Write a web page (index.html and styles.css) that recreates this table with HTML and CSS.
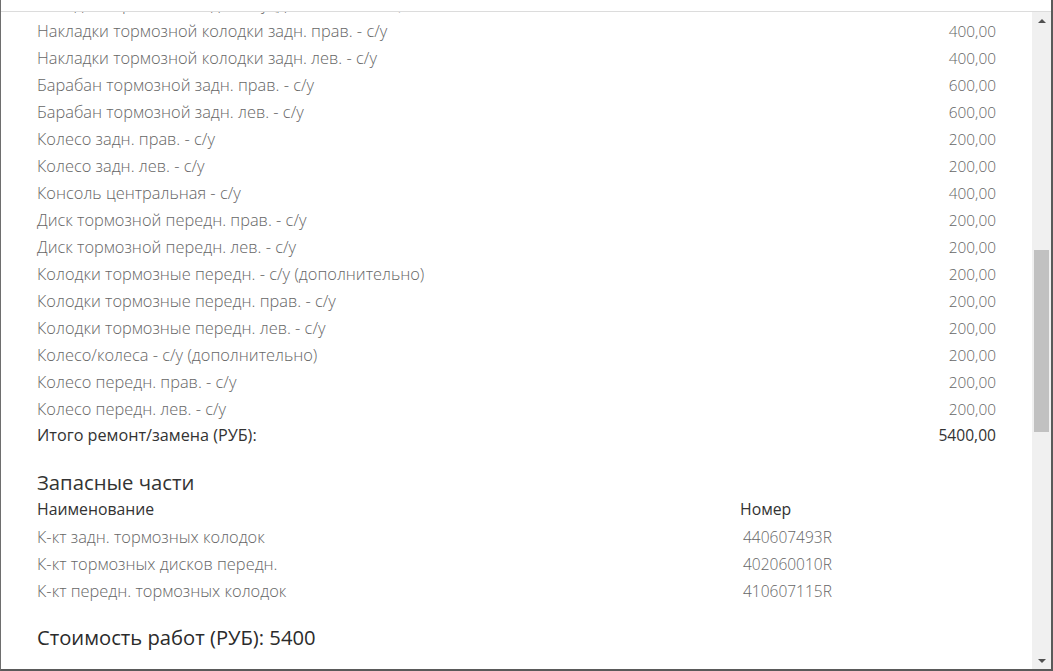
FILE: index.html
```html
<!DOCTYPE html>
<html lang="ru">
<head>
<meta charset="utf-8">
<title>Заказ-наряд</title>
<link rel="stylesheet" href="styles.css">
</head>
<body>
<div class="window">
  <div class="topbar"></div>
  <div class="main">
    <div class="viewport">
      <div class="content">
        <div class="rows">
          <div class="row"><span>Колодки тормозные задн. - с/у (дополнительно)</span><span class="price">400,00</span></div>
          <div class="row"><span>Накладки тормозной колодки задн. прав. - с/у</span><span class="price">400,00</span></div>
          <div class="row"><span>Накладки тормозной колодки задн. лев. - с/у</span><span class="price">400,00</span></div>
          <div class="row"><span>Барабан тормозной задн. прав. - с/у</span><span class="price">600,00</span></div>
          <div class="row"><span>Барабан тормозной задн. лев. - с/у</span><span class="price">600,00</span></div>
          <div class="row"><span>Колесо задн. прав. - с/у</span><span class="price">200,00</span></div>
          <div class="row"><span>Колесо задн. лев. - с/у</span><span class="price">200,00</span></div>
          <div class="row"><span>Консоль центральная - с/у</span><span class="price">400,00</span></div>
          <div class="row"><span>Диск тормозной передн. прав. - с/у</span><span class="price">200,00</span></div>
          <div class="row"><span>Диск тормозной передн. лев. - с/у</span><span class="price">200,00</span></div>
          <div class="row"><span>Колодки тормозные передн. - с/у (дополнительно)</span><span class="price">200,00</span></div>
          <div class="row"><span>Колодки тормозные передн. прав. - с/у</span><span class="price">200,00</span></div>
          <div class="row"><span>Колодки тормозные передн. лев. - с/у</span><span class="price">200,00</span></div>
          <div class="row"><span>Колесо/колеса - с/у (дополнительно)</span><span class="price">200,00</span></div>
          <div class="row"><span>Колесо передн. прав. - с/у</span><span class="price">200,00</span></div>
          <div class="row"><span>Колесо передн. лев. - с/у</span><span class="price">200,00</span></div>
          <div class="row total"><span>Итого ремонт/замена (РУБ):</span><span class="price">5400,00</span></div>
        </div>

        <h2 class="section-title">Запасные части</h2>
        <div class="parts">
          <div class="part head"><span class="name">Наименование</span><span class="num">Номер</span></div>
          <div class="part"><span class="name">К-кт задн. тормозных колодок</span><span class="num code">440607493R</span></div>
          <div class="part"><span class="name">К-кт тормозных дисков передн.</span><span class="num code">402060010R</span></div>
          <div class="part"><span class="name">К-кт передн. тормозных колодок</span><span class="num code">410607115R</span></div>
        </div>

        <h2 class="cost">Стоимость работ (РУБ): 5400</h2>
      </div>
    </div>
    <div class="scrollbar">
      <div class="sb-btn"><span class="arrow-up"></span></div>
      <div class="sb-before"></div>
      <div class="sb-thumb"></div>
      <div class="sb-after"></div>
      <div class="sb-btn"><span class="arrow-down"></span></div>
    </div>
  </div>
</div>
</body>
</html>
```

FILE: styles.css
```css
html, body {
  margin: 0;
  padding: 0;
  background: #ffffff;
}

body {
  width: 1053px;
  height: 671px;
  overflow: hidden;
  font-family: "Open Sans", "Noto Sans", sans-serif;
}

.window {
  box-sizing: border-box;
  width: 1053px;
  height: 671px;
  display: flex;
  flex-direction: column;
  border-left: 1px solid #6e6e6e;
  border-right: 2px solid #5a5a5a;
  border-bottom: 2px solid #5a5a5a;
  background: #fff;
}

.topbar {
  height: 11px;
  flex: none;
  border-bottom: 1px solid #dcdcdc;
  background: #fff;
}

.main {
  flex: 1;
  display: flex;
  min-height: 0;
}

.viewport {
  flex: 1;
  overflow: hidden;
}

.content {
  margin-top: -22px;
  padding: 0 36px;
}

.rows {
  display: flex;
  flex-direction: column;
}

.row {
  display: flex;
  justify-content: space-between;
  align-items: baseline;
  height: 27px;
  line-height: 27px;
  font-size: 16.4px;
  font-weight: 300;
  color: #666;
}

.row .price {
  font-size: 15.4px;
}

.row.total {
  font-size: 16.2px;
  font-weight: 400;
  color: #333;
}

.row.total .price {
  font-size: 15.6px;
}

.section-title {
  margin: 19px 0 0;
  font-size: 20.3px;
  line-height: 28px;
  font-weight: 400;
  color: #333;
}

.parts {
  display: flex;
  flex-direction: column;
}

.part {
  display: flex;
  align-items: baseline;
  height: 27px;
  line-height: 27px;
  font-size: 16.4px;
  font-weight: 300;
  color: #666;
}

.part .name {
  width: 703px;
  flex: none;
}

.part .code {
  padding-left: 3px;
  font-size: 15.5px;
}

.part.head {
  font-size: 15.8px;
  font-weight: 400;
  color: #333;
}

.cost {
  margin: 19px 0 0;
  font-size: 20.2px;
  line-height: 28px;
  font-weight: 500;
  color: #2b2b2b;
}

.scrollbar {
  width: 19px;
  flex: none;
  background: #f0f0f0;
  display: flex;
  flex-direction: column;
}

.sb-btn {
  height: 17px;
  flex: none;
  display: flex;
  align-items: center;
  justify-content: center;
}

.sb-before {
  height: 221px;
  flex: none;
}

.sb-thumb {
  height: 182px;
  flex: none;
  margin: 0 2px;
  background: #c1c1c1;
}

.sb-after {
  flex: 1;
}

.arrow-up {
  width: 0;
  height: 0;
  border-left: 4px solid transparent;
  border-right: 4px solid transparent;
  border-bottom: 4px solid #505050;
}

.arrow-down {
  width: 0;
  height: 0;
  border-left: 4px solid transparent;
  border-right: 4px solid transparent;
  border-top: 4px solid #505050;
}
```
